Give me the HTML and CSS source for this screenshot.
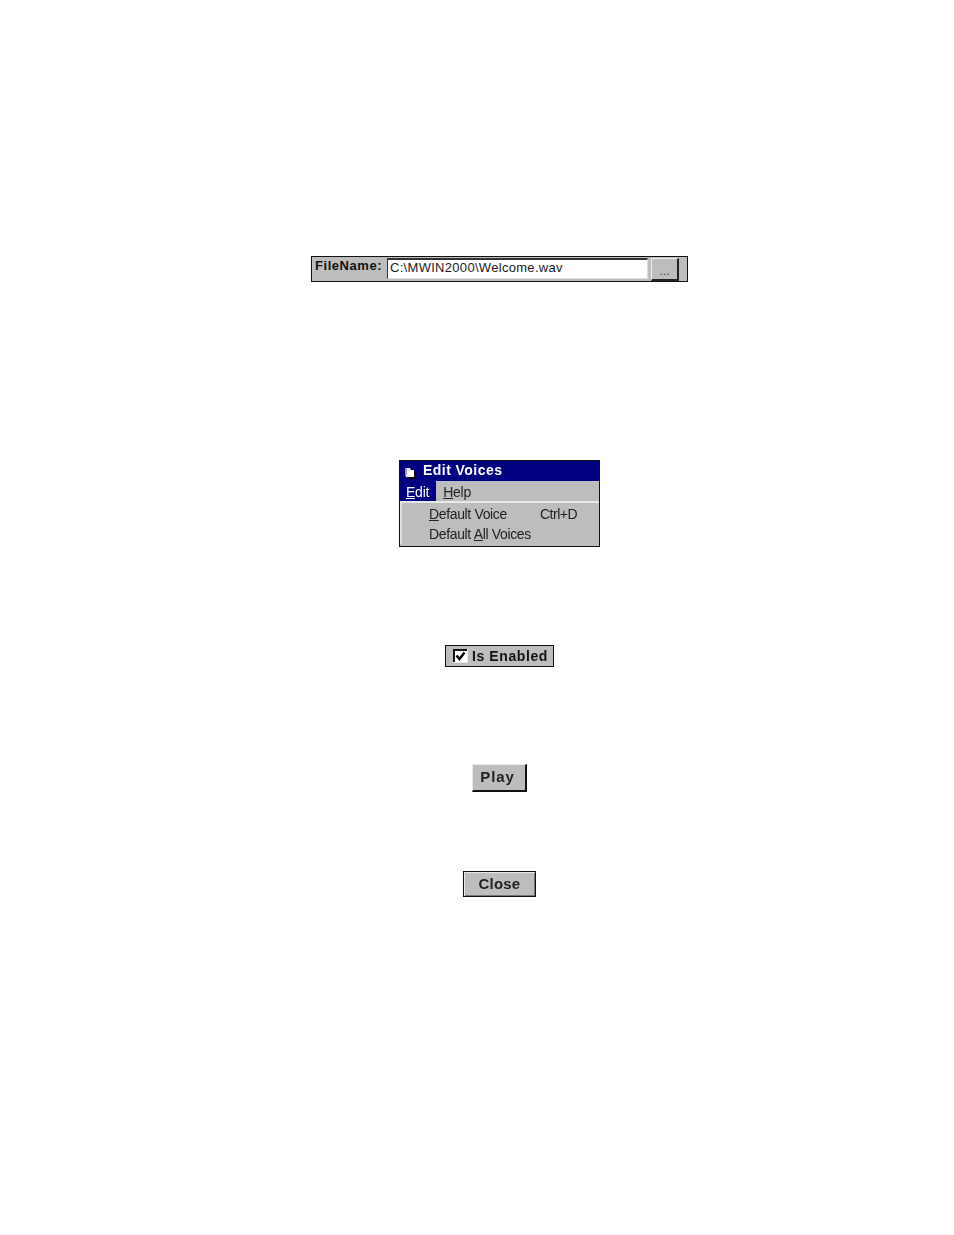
FILE: index.html
```html
<!DOCTYPE html>
<html lang="en">
<head>
    <meta charset="UTF-8">
    <title>Edit Voices</title>
    <link rel="stylesheet" href="styles.css">
</head>
<body>
    <div class="page">
        <div class="file-bar">
            <span class="file-label">FileName:</span>
            <div class="file-input">C:\MWIN2000\Welcome.wav</div>
            <div class="file-button">...</div>
        </div>

        <div class="voices-window">
            <div class="title-bar">
                <svg class="title-icon" width="13" height="12" viewBox="0 0 13 12">
                    <path d="M1 1h5l1 2h3v8H3L1 8z" fill="#e8e8e8"/>
                    <path d="M3 4h7v6H3z" fill="#fff"/>
                    <path d="M10 4h1v7h1v1H3v-2h7z" fill="#000"/>
                    <path d="M1 1h2v7H1z" fill="#9a9a9a"/>
                </svg>
                <span>Edit Voices</span>
            </div>
            <div class="menu-bar">
                <span class="menu-item active"><u>E</u>dit</span>
                <span class="menu-item"><u>H</u>elp</span>
            </div>
            <div class="menu-list">
                <div class="menu-row">
                    <span class="menu-name"><u>D</u>efault Voice</span>
                    <span class="menu-key">Ctrl+D</span>
                </div>
                <div class="menu-row">
                    <span class="menu-name">Default <u>A</u>ll Voices</span>
                </div>
            </div>
        </div>

        <div class="check-box">
            <svg class="check-icon" width="15" height="14" viewBox="0 0 15 14">
                <rect x="0" y="0" width="15" height="14" fill="#e8e8e8"/>
                <path d="M1 13V1h13" fill="none" stroke="#111" stroke-width="2"/>
                <rect x="2" y="2" width="12" height="11" fill="#fff"/>
                <path d="M3.500 6.500l3 3.500 5-6.500" fill="none" stroke="#000" stroke-width="2.400"/>
            </svg>
            <span>Is Enabled</span>
        </div>

        <div class="btn btn-play">Play</div>
        <div class="btn btn-close">Close</div>
    </div>
</body>
</html>
```

FILE: styles.css
```css
* {
    margin: 0;
    padding: 0;
    box-sizing: border-box;
    font-family: 'Liberation Sans', Arial, sans-serif;
}

html, body {
    background: #fff;
    color: #111;
}

.page {
    display: flex;
    flex-direction: column;
    align-items: center;
    height: 1235px;
    padding-top: 256px;
    padding-left: 45px;
    filter: blur(0.35px);
}

/* file name bar */
.file-bar {
    display: flex;
    align-items: flex-start;
    width: 377px;
    height: 26px;
    background: #bdbdbd;
    border: 1px solid #111;
    padding-top: 1px;
}

.file-label {
    width: 75px;
    padding-left: 3px;
    font-size: 13px;
    line-height: 15px;
    font-weight: bold;
    letter-spacing: 0.55px;
}

.file-input {
    width: 261px;
    height: 21px;
    background: #fff;
    border-top: 2px solid #333;
    border-left: 1px solid #333;
    border-right: 1px solid #ddd;
    border-bottom: 1px solid #ddd;
    padding-left: 2px;
    font-size: 13px;
    line-height: 16px;
    letter-spacing: 0.3px;
    color: #222;
}

.file-button {
    width: 28px;
    height: 23px;
    margin-left: 3px;
    background: #bdbdbd;
    border-top: 1px solid #eee;
    border-left: 1px solid #eee;
    border-right: 2px solid #222;
    border-bottom: 2px solid #222;
    text-align: center;
    font-size: 12px;
    line-height: 24px;
    color: #444;
}

/* edit voices window */
.voices-window {
    width: 201px;
    height: 87px;
    margin-top: 178px;
    background: #bdbdbd;
    border: 1px solid #111;
}

.title-bar {
    display: flex;
    align-items: center;
    height: 20px;
    padding-bottom: 2px;
    background: #000080;
    color: #fff;
    font-size: 14px;
    font-weight: bold;
    letter-spacing: 0.45px;
}

.title-icon {
    margin: 5px 6px 0 4px;
}

.menu-bar {
    display: flex;
    height: 22px;
    border-bottom: 2px solid #e8e8e8;
    font-size: 14px;
    color: #222;
}

.menu-item {
    padding: 1px 7px 0 6px;
    line-height: 20px;
    letter-spacing: -0.25px;
}

.menu-item.active {
    background: #000080;
    color: #fff;
    padding-right: 7px;
    margin-right: 1px;
}

.menu-list {
    padding-top: 1px;
    border-left: 2px solid #e0e0e0;
    font-size: 14px;
    line-height: 20px;
    letter-spacing: -0.35px;
    color: #222;
}

.menu-row {
    display: flex;
    padding-left: 27px;
}

.menu-name {
    width: 111px;
}

.menu-key {
    letter-spacing: -0.5px;
}

/* checkbox */
.check-box {
    display: flex;
    align-items: center;
    width: 109px;
    height: 22px;
    margin-top: 98px;
    padding-left: 7px;
    padding-bottom: 1px;
    background: #bdbdbd;
    border: 1px solid #111;
    font-size: 14px;
    font-weight: bold;
    letter-spacing: 0.6px;
}

.check-icon {
    margin-right: 4px;
}

/* buttons */
.btn {
    background: #bdbdbd;
    border-top: 1px solid #e8e8e8;
    border-left: 1px solid #e8e8e8;
    text-align: center;
    font-weight: bold;
    color: #222;
}

.btn-play {
    width: 55px;
    height: 28px;
    margin-top: 97px;
    padding-right: 3px;
    border-right: 2px solid #111;
    border-bottom: 2px solid #111;
    font-size: 15px;
    line-height: 23px;
    letter-spacing: 0.9px;
}

.btn-close {
    width: 73px;
    height: 26px;
    margin-top: 79px;
    border: 1px solid #111;
    box-shadow: inset 1px 1px 0 #e8e8e8, inset -1px -1px 0 #777;
    font-size: 15px;
    line-height: 23px;
    letter-spacing: 0.2px;
}
```
